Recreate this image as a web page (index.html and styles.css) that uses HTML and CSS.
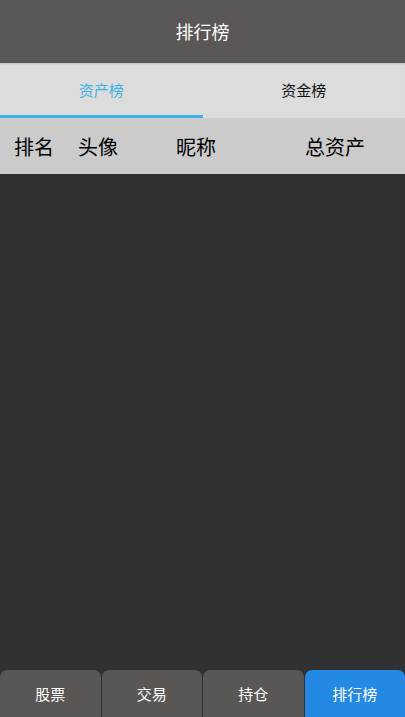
FILE: index.html
```html
<!DOCTYPE html>
<html lang="zh">
<head>
<meta charset="utf-8">
<link rel="stylesheet" href="styles.css">
</head>
<body>
<div class="app">
  <header class="topbar">排行榜</header>
  <nav class="tabs">
    <div class="tab active">资产榜</div>
    <div class="tab">资金榜</div>
  </nav>
  <div class="thead">
    <span class="c-rank">排名</span>
    <span class="c-avatar">头像</span>
    <span class="c-name">昵称</span>
    <span class="c-total">总资产</span>
  </div>
  <main class="list"></main>
  <footer class="bottombar">
    <div class="btab">股票</div>
    <div class="btab">交易</div>
    <div class="btab">持仓</div>
    <div class="btab on">排行榜</div>
  </footer>
</div>
</body>
</html>
```
FILE: styles.css
```css
html, body {
  margin: 0;
  padding: 0;
  height: 100%;
}
body {
  font-family: "Noto Sans CJK SC", "Noto Sans", sans-serif;
  background: #313131;
}
.app {
  display: flex;
  flex-direction: column;
  height: 717px;
}
.topbar {
  height: 63px;
  background: #5b5756;
  color: #fff;
  font-size: 18px;
  display: flex;
  align-items: center;
  justify-content: center;
  padding-bottom: 2px;
  box-sizing: border-box;
  flex-shrink: 0;
}
.tabs {
  height: 55px;
  background: #dcdcdc;
  display: flex;
  box-shadow: inset 0 2px 2px -1px rgba(0,0,0,0.12);
  flex-shrink: 0;
}
.tab {
  flex: 1;
  display: flex;
  align-items: center;
  justify-content: center;
  font-size: 15px;
  color: #111;
  box-sizing: border-box;
  padding-bottom: 2px;
}
.tab.active {
  color: #3cb3e2;
  border-bottom: 3px solid #3cb3e2;
  padding-bottom: 0;
  padding-top: 1px;
}
.thead {
  height: 56px;
  background: #cbcbcb;
  display: flex;
  align-items: center;
  font-size: 20px;
  color: #000;
  flex-shrink: 0;
}
.c-rank { margin-left: 14px; }
.c-avatar { margin-left: 24px; }
.c-name { margin-left: 58px; }
.c-total { margin-left: 89px; }
.list {
  flex: 1;
  background: #313131;
}
.bottombar {
  height: 47px;
  display: flex;
  gap: 1px;
  flex-shrink: 0;
}
.btab {
  flex: 1;
  background: #5a5654;
  color: #fff;
  font-size: 15px;
  display: flex;
  align-items: center;
  justify-content: center;
  border-radius: 7px 7px 0 0;
}
.btab.on {
  background: #2389e2;
}
```
